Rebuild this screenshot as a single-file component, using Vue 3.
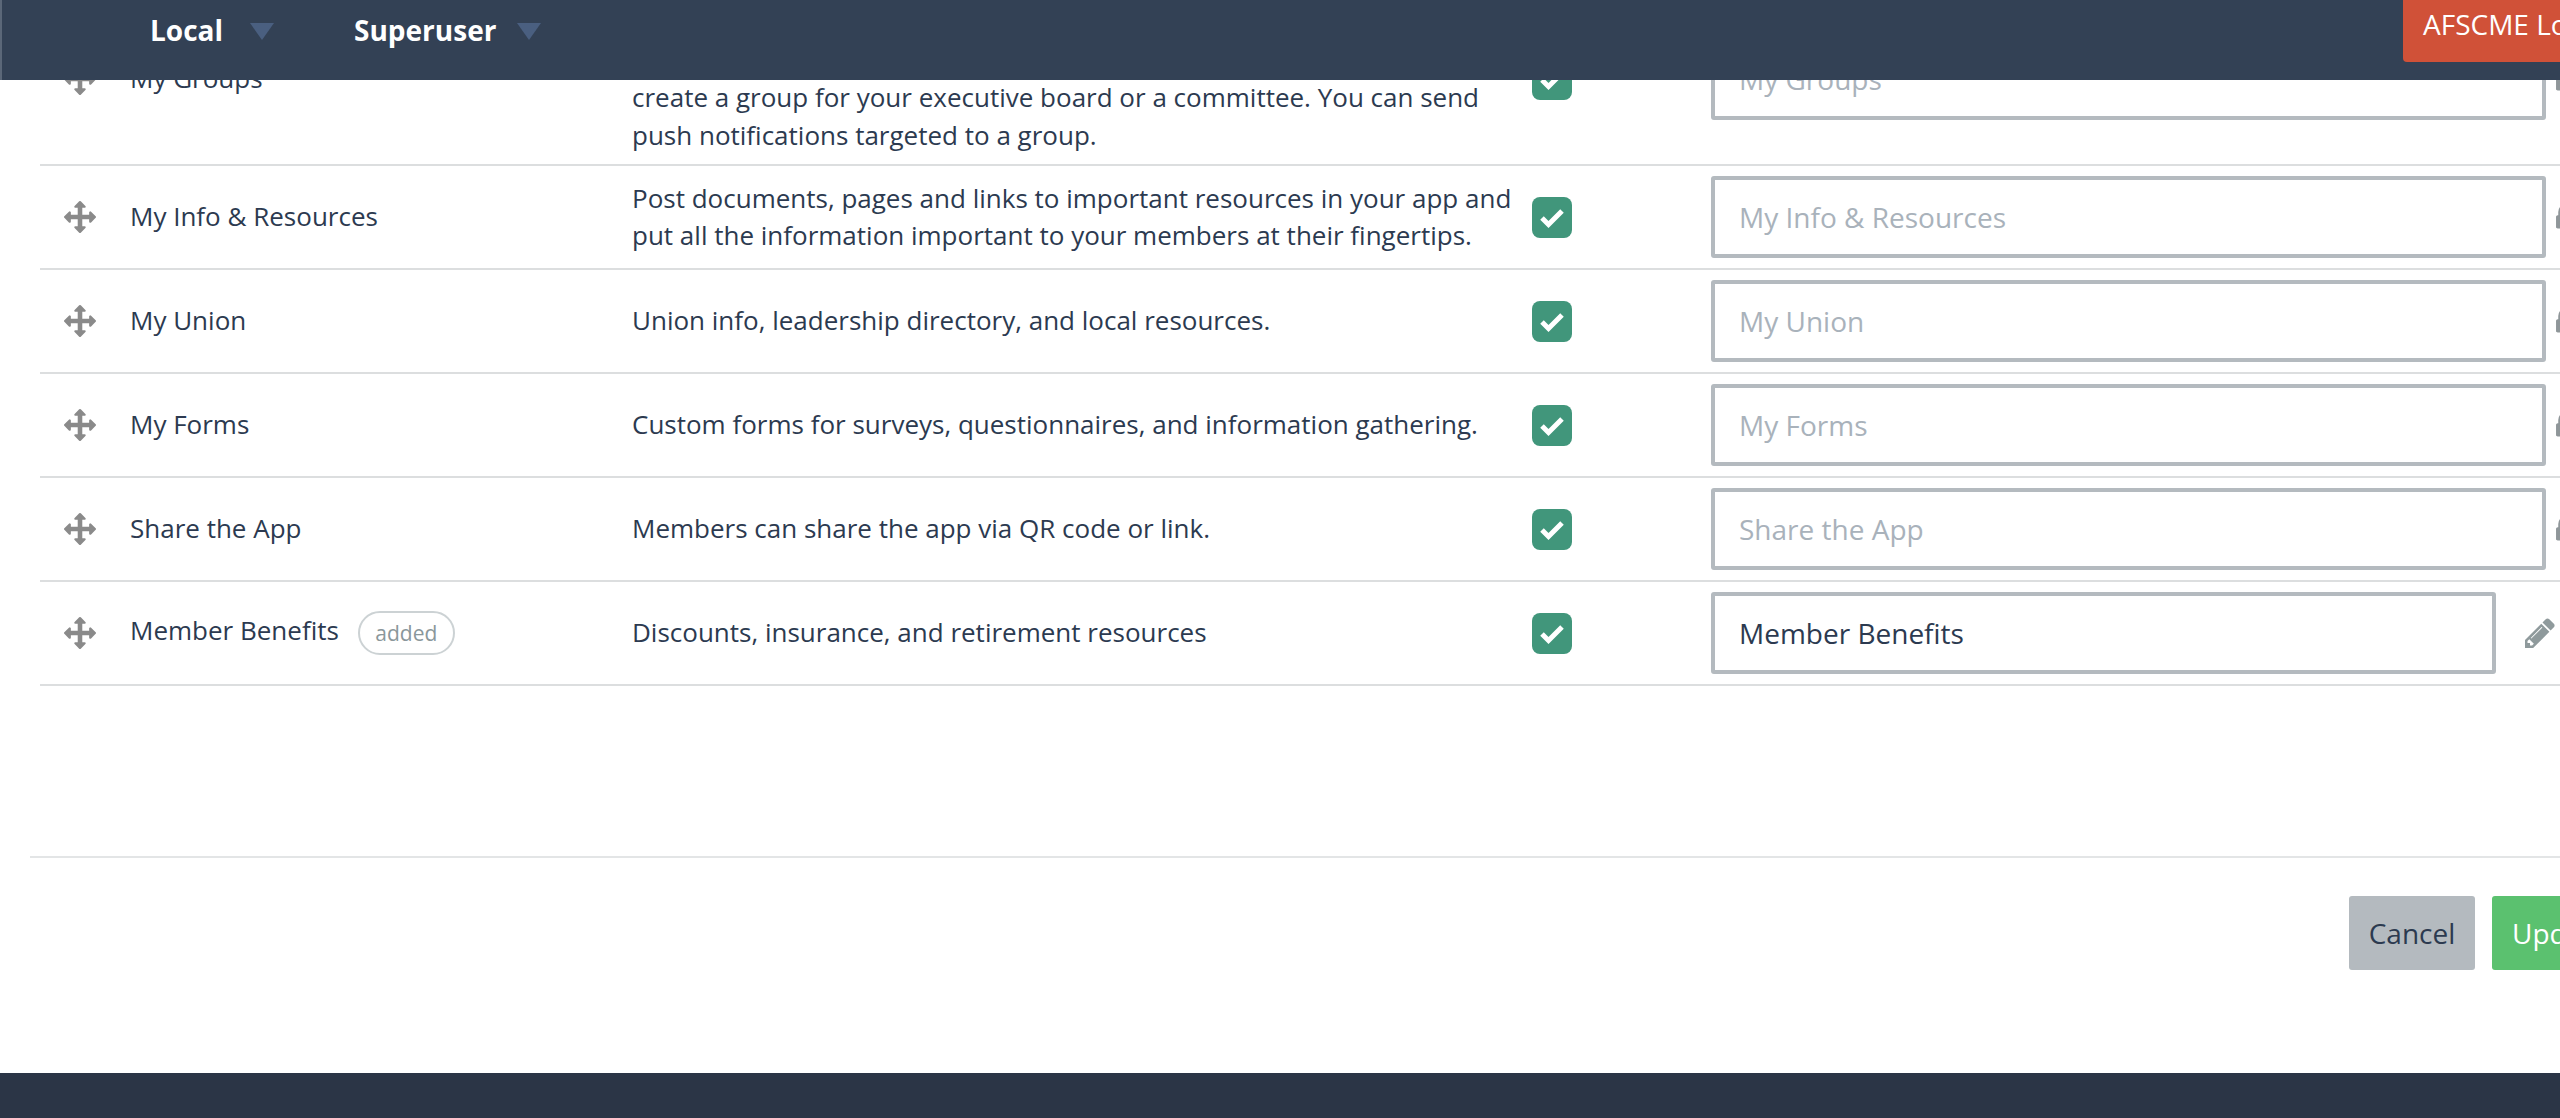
<script setup>
const rows = [
  { name: 'My Groups', desc: 'Group your members together and organize them however you like.\nGroups appear under this tab in your app. For example, you can\ncreate a group for your executive board or a committee. You can send\npush notifications targeted to a group.', locked: true },
  { name: 'My Info & Resources', desc: 'Post documents, pages and links to important resources in your app and put all the information important to your members at their fingertips.', locked: true },
  { name: 'My Union', desc: 'Union info, leadership directory, and local resources.', locked: true },
  { name: 'My Forms', desc: 'Custom forms for surveys, questionnaires, and information gathering.', locked: true },
  { name: 'Share the App', desc: 'Members can share the app via QR code or link.', locked: true },
  { name: 'Member Benefits', desc: 'Discounts, insurance, and retirement resources', locked: false, value: 'Member Benefits' }
]
</script>

<template>
  <div class="page">
    <header class="topbar">
      <nav class="nav">
        <div class="nav-item"><span>Local</span><i class="caret"></i></div>
        <div class="nav-item"><span>Superuser</span><i class="caret"></i></div>
      </nav>
      <div class="org-tab">AFSCME Local 3299</div>
    </header>

    <main class="content">
      <section class="list">
        <div v-for="row in rows" :key="row.name" class="row">
          <div class="drag">
            <svg width="32" height="32" viewBox="0 0 1792 1792" aria-hidden="true">
              <path fill="currentColor" d="M1792 896q0 26-19 45l-256 256q-19 19-45 19t-45-19-19-45v-128h-384v384h128q26 0 45 19t19 45-19 45l-256 256q-19 19-45 19t-45-19l-256-256q-19-19-19-45t19-45 45-19h128v-384h-384v128q0 26-19 45t-45 19-45-19l-256-256q-19-19-19-45t19-45l256-256q19-19 45-19t45 19 19 45v128h384v-384h-128q-26 0-45-19t-19-45 19-45l256-256q19-19 45-19t45 19l256 256q19 19 19 45t-19 45-45 19h-128v384h384v-128q0-26 19-45t45-19 45 19l256 256q19 19 19 45z"/>
            </svg>
          </div>
          <div class="name" :class="{ 'name-added': !row.locked }">
            <span>{{ row.name }}</span>
            <span v-if="!row.locked" class="badge">added</span>
          </div>
          <div class="desc">{{ row.desc }}</div>
          <div class="check-cell">
            <span class="check">
              <svg width="40" height="41" viewBox="0 0 40 41" aria-hidden="true">
                <path d="M10 21 L16.5 27.5 L30 14" fill="none" stroke="#fff" stroke-width="5"/>
              </svg>
            </span>
          </div>
          <div class="field" :class="{ 'field-editable': !row.locked }">
            <input class="input" :placeholder="row.locked ? row.name : ''" :value="row.value || ''" />
            <svg v-if="row.locked" class="lock" width="20" height="31" viewBox="0 0 1152 1792" aria-hidden="true">
              <path fill="currentColor" d="M320 768h512v-192q0-106-75-181t-181-75-181 75-75 181v192zm832 96v576q0 40-28 68t-68 28h-960q-40 0-68-28t-28-68v-576q0-40 28-68t68-28h32v-192q0-184 132-316t316-132 316 132 132 316v192h32q40 0 68 28t28 68z"/>
            </svg>
            <svg v-else class="pencil" width="30" height="30" viewBox="0 128 1536 1536" aria-hidden="true">
              <path fill="currentColor" d="M363 1536l91-91-235-235-91 91v107h128v128h107zm523-928q0-22-22-22-10 0-17 7l-542 542q-7 7-7 17 0 22 22 22 10 0 17-7l542-542q7-7 7-17zm-54-192l416 416-832 832h-416v-416zm683 96q0 53-37 90l-166 166-416-416 166-165q36-38 90-38 53 0 91 38l235 234q37 39 37 90z"/>
            </svg>
          </div>
        </div>
      </section>

      <section class="actions">
        <button class="btn btn-cancel" type="button">Cancel</button>
        <button class="btn btn-update" type="button">Update</button>
      </section>

      <footer class="page-footer"></footer>
    </main>
  </div>
</template>

<style>
html, body {
  margin: 0;
  overflow: hidden;
  background: #fff;
}
</style>

<style scoped>
.page {
  position: relative;
  width: 2560px;
  height: 1118px;
  overflow: hidden;
  background: #fff;
  font-family: "Open Sans", "Liberation Sans", sans-serif;
  font-size: 26px;
  color: #2c3a50;
}
.topbar {
  position: absolute;
  z-index: 2;
  top: 0;
  left: 0;
  right: 0;
  height: 80px;
  box-sizing: border-box;
  display: flex;
  justify-content: space-between;
  align-items: flex-start;
  background: #334155;
  border-left: 2px solid #5b6778;
}
.nav {
  display: flex;
  gap: 80px;
  padding-left: 148px;
  padding-top: 11px;
}
.nav-item {
  display: flex;
  align-items: center;
  gap: 27px;
  color: #fff;
  font-weight: 700;
  font-size: 28px;
  line-height: 38px;
}
.nav-item:last-child {
  gap: 21px;
}
.caret {
  display: block;
  width: 0;
  height: 0;
  margin-top: 3px;
  border-left: 12.5px solid transparent;
  border-right: 12.5px solid transparent;
  border-top: 17px solid #4a5f80;
}
.org-tab {
  flex: none;
  width: 157px;
  height: 62px;
  box-sizing: border-box;
  padding: 5px 0 0 20px;
  overflow: hidden;
  white-space: nowrap;
  font-size: 28px;
  line-height: 38px;
  color: #fff;
  background: #d05138;
  border-bottom-left-radius: 4px;
}
.content {
  margin-top: -6px;
}
.list {
  margin-left: 40px;
  width: 2620px;
}
.row {
  display: grid;
  grid-template-columns: 90px 502px 900px 179px 1fr;
  align-items: center;
  box-sizing: border-box;
  padding: 10px 0;
  border-bottom: 2px solid #dcdedf;
}
.drag {
  display: flex;
  padding-left: 24px;
  color: #8a8a8a;
}
.name {
  display: flex;
  align-items: center;
  gap: 19px;
  line-height: 36px;
}
.name > span:first-child {
  margin-top: -2px;
}
.name-added > span:first-child {
  margin-top: -7px;
}
.badge {
  box-sizing: border-box;
  width: 97px;
  height: 44px;
  display: flex;
  align-items: center;
  justify-content: center;
  border: 2px solid #ccd2d4;
  border-radius: 22px;
  font-size: 21px;
  color: #8a979b;
}
.desc {
  padding-right: 20px;
  line-height: 37.5px;
  white-space: pre-line;
}
.check-cell {
  display: flex;
}
.check {
  display: block;
  width: 40px;
  height: 41px;
  background: #41967b;
  border-radius: 8px;
}
.check svg {
  display: block;
}
.field {
  display: flex;
  align-items: center;
  gap: 10px;
}
.field-editable {
  gap: 29px;
}
.input {
  flex: none;
  width: 835px;
  height: 82px;
  box-sizing: border-box;
  padding: 0 24px;
  border: 4px solid #b4babf;
  border-radius: 3px;
  outline: none;
  background: #fff;
  font: inherit;
  font-size: 28px;
  color: inherit;
}
.input::placeholder {
  color: #a9b2bb;
  opacity: 1;
}
.field-editable .input {
  width: 785px;
}
.lock {
  color: #8f9699;
  flex: none;
}
.pencil {
  color: #8f9a9c;
  flex: none;
}
.actions {
  width: 2598px;
  margin: 170px 0 0 30px;
  padding: 38px 0 103px;
  box-sizing: border-box;
  display: flex;
  justify-content: flex-end;
  gap: 17px;
  border-top: 2px solid #e3e5e6;
}
.btn {
  flex: none;
  height: 74px;
  border: 0;
  border-radius: 3px;
  font: inherit;
  font-size: 28px;
}
.btn-cancel {
  width: 126px;
  background: #b4babf;
  color: #2c3a50;
}
.btn-update {
  width: 136px;
  background: #5bc16f;
  color: #fff;
}
.page-footer {
  height: 45px;
  background: #2b3546;
}
</style>
